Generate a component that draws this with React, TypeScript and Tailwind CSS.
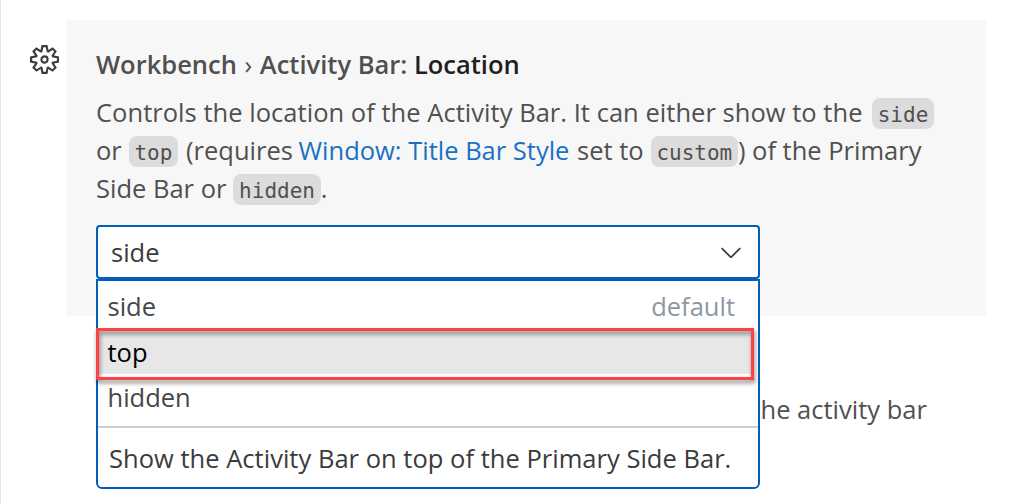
import type { ReactNode } from 'react';
import { VscChevronDown, VscSettingsGear } from 'react-icons/vsc';

function Code({ children, className = '' }: { children: ReactNode; className?: string }) {
  return (
    <code
      className={`mt-[2px] inline-flex h-[31px] items-center rounded-[8px] bg-[#dcdcdc] px-[5.7px] pt-[4px] font-['DejaVu_Sans_Mono',monospace] text-[21px] leading-[27px] ${className}`}
    >
      {children}
    </code>
  );
}

function SelectMenu() {
  return (
    <div className="absolute -inset-x-0.5 top-[52px] h-[210px] rounded-b-[6px] border-2 border-[#005fb8] bg-white">
      <ul className="flex h-[145px] flex-col text-[#474747]">
        <li className="flex h-12 items-center justify-between pl-[9.5px] pr-[23px]">
          <span className="pt-0.5">side</span>
          <span className="pt-0.5 text-[#8e96a2]">default</span>
        </li>
        <li className="relative mr-1 flex h-[45px] items-center bg-[#e7e7e7] pl-[9.5px] text-black">
          top
          <span className="absolute -left-0.5 right-0 top-[-1px] h-[52px] border-[3px] border-[#fc4245] drop-shadow-[1px_3px_2px_rgba(0,0,0,0.5)]" />
        </li>
        <li className="flex h-[46px] items-center pl-[9.5px]">hidden</li>
      </ul>
      <div className="flex h-[61px] items-center border-t-2 border-[#cecece] pl-[11px] tracking-[0.02px] text-[#3b3b3b]">
        Show the Activity Bar on top of the Primary Side Bar.
      </div>
    </div>
  );
}

export default function App() {
  return (
    <div className="flex h-[504px] w-[1026px] overflow-hidden whitespace-nowrap border-l border-[#e5e5e5] bg-white pt-5 font-['Open_Sans','Noto_Sans',sans-serif] text-[25.5px] leading-[38px] text-[#505050]">
      <div className="w-[66px] shrink-0 pl-[29px] pt-[25px]">
        <VscSettingsGear className="size-[29px] text-[#3b3b3b]" />
      </div>
      <div className="w-[919px]">
        <section className="h-[296px] bg-[#f7f7f7] pl-[29px] pt-[25px]">
          <h3 className="font-[580]">
            Workbench <span className="mx-[1px] font-normal">›</span> Activity Bar: <span className="text-[#1f1f1f]">Location</span>
          </h3>
          <div className="mt-[10px]">
            <div className="flex h-[38px] items-center">
              <span className="tracking-[0.035px]">
                Controls the location of the Activity Bar. It can either show to the
              </span>
              <Code className="ml-[9.5px]">side</Code>
            </div>
            <div className="flex h-[38px] items-center">
              <span>or</span>
              <Code className="ml-[7px] mr-[8px]">top</Code>
              <span>(requires&nbsp;</span>
              <a className="-ml-px text-[#1a70c4]">Window: Title Bar Style</a>
              <span className="ml-px">&nbsp;set to</span>
              <Code className="ml-[7px]">custom</Code>
              <span>) of the Primary</span>
            </div>
            <div className="flex h-[38px] items-center">
              <span>Side Bar or</span>
              <Code className="ml-[7px]">hidden</Code>
              <span>.</span>
            </div>
          </div>
          <div className="relative z-10 mt-[18px] flex h-[54px] w-[664px] items-center justify-between rounded-[4px] border-2 border-[#005fb8] bg-white pl-[13px] pr-[11px] text-[#3b3b3b]">
            <span>side</span>
            <VscChevronDown className="size-8" />
            <SelectMenu />
          </div>
        </section>
        <p className="pl-[693.5px] pt-[74px]">he activity bar</p>
      </div>
    </div>
  );
}
